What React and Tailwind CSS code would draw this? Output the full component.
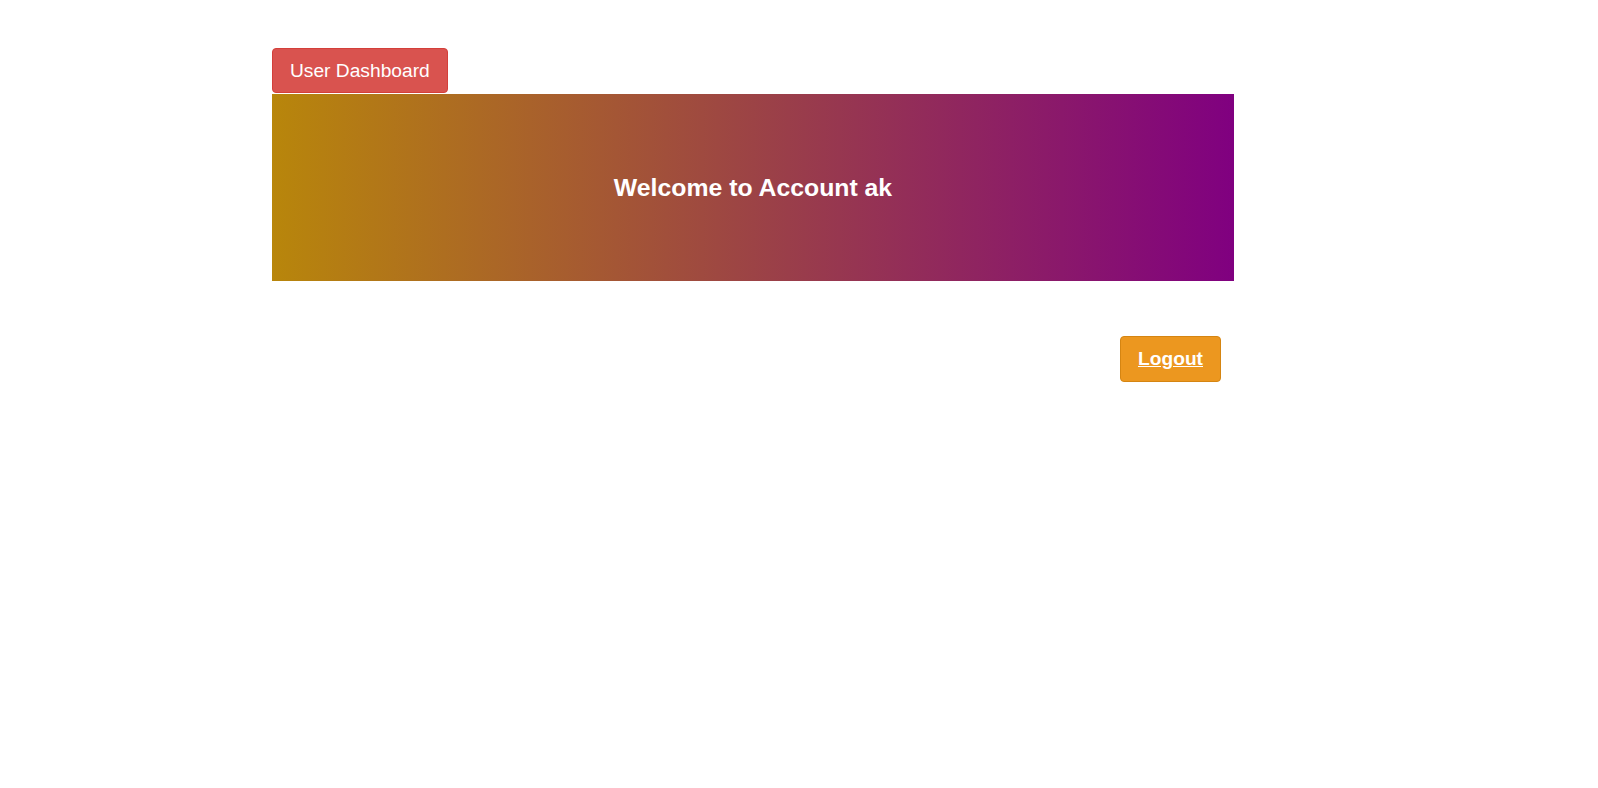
import React from 'react';

const App = () => {
  return (
    <div className="min-h-screen bg-white font-['Liberation_Sans',Arial,sans-serif]">
      <div className="ml-[272px] w-[962px] pt-[48px]">
        {/* Dashboard tab */}
        <button className="h-[45px] px-[17px] bg-[#d9534f] border border-[#d43f3a] rounded-[4px] text-white text-[19.2px] leading-none">
          User Dashboard
        </button>

        {/* Welcome banner */}
        <div className="mt-[1px] h-[187px] flex items-center justify-center bg-[linear-gradient(to_right,#b8860b,#800080)]">
          <h3 className="text-white text-[24.8px] font-bold">Welcome to Account ak</h3>
        </div>

        <div className="flex justify-end pr-[13px] mt-[55px]">
          <button className="h-[46px] px-[17px] bg-[#ec971f] border border-[#d58512] rounded-[4px] text-white text-[19.2px] font-bold underline leading-none">
            Logout
          </button>
        </div>
      </div>
    </div>
  );
};

export default App;
